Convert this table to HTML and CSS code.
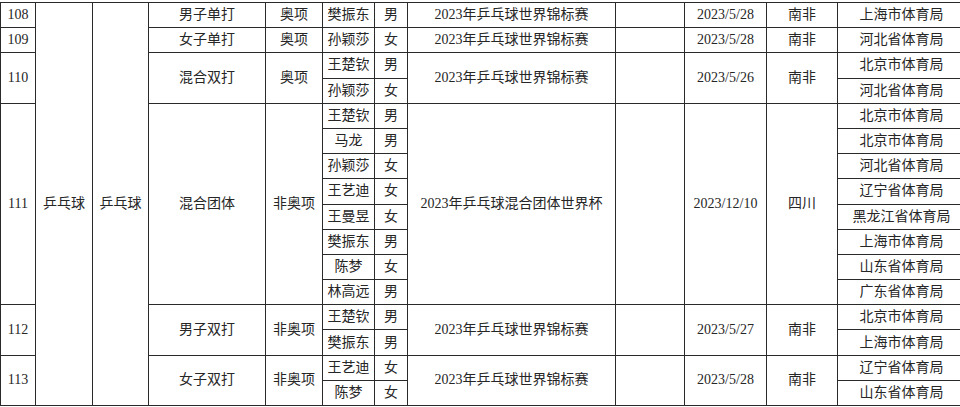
FILE: index.html
```html
<!DOCTYPE html>
<html lang="zh-CN">
<head>
<meta charset="utf-8">
<title>乒乓球</title>
<link rel="stylesheet" href="styles.css">
</head>
<body>
<div class="sheet">
<table class="grid">
  <colgroup>
    <col class="c-no"><col class="c-major"><col class="c-minor"><col class="c-item"><col class="c-oly">
    <col class="c-name"><col class="c-sex"><col class="c-event"><col class="c-blank"><col class="c-date">
    <col class="c-place"><col class="c-unit">
  </colgroup>
  <tbody>
    <tr>
      <td>108</td><td rowspan="16">乒乓球</td><td rowspan="16">乒乓球</td>
      <td>男子单打</td><td>奥项</td><td>樊振东</td><td>男</td>
      <td>2023年乒乓球世界锦标赛</td><td></td><td>2023/5/28</td><td>南非</td><td>上海市体育局</td>
    </tr>
    <tr>
      <td>109</td><td>女子单打</td><td>奥项</td><td>孙颖莎</td><td>女</td>
      <td>2023年乒乓球世界锦标赛</td><td></td><td>2023/5/28</td><td>南非</td><td>河北省体育局</td>
    </tr>
    <tr>
      <td rowspan="2">110</td><td rowspan="2">混合双打</td><td rowspan="2">奥项</td><td>王楚钦</td><td>男</td>
      <td rowspan="2">2023年乒乓球世界锦标赛</td><td rowspan="2"></td><td rowspan="2">2023/5/26</td><td rowspan="2">南非</td><td>北京市体育局</td>
    </tr>
    <tr><td>孙颖莎</td><td>女</td><td>河北省体育局</td></tr>
    <tr>
      <td rowspan="8">111</td><td rowspan="8">混合团体</td><td rowspan="8">非奥项</td><td>王楚钦</td><td>男</td>
      <td rowspan="8">2023年乒乓球混合团体世界杯</td><td rowspan="8"></td><td rowspan="8">2023/12/10</td><td rowspan="8">四川</td><td>北京市体育局</td>
    </tr>
    <tr><td>马龙</td><td>男</td><td>北京市体育局</td></tr>
    <tr><td>孙颖莎</td><td>女</td><td>河北省体育局</td></tr>
    <tr><td>王艺迪</td><td>女</td><td>辽宁省体育局</td></tr>
    <tr><td>王曼昱</td><td>女</td><td>黑龙江省体育局</td></tr>
    <tr><td>樊振东</td><td>男</td><td>上海市体育局</td></tr>
    <tr><td>陈梦</td><td>女</td><td>山东省体育局</td></tr>
    <tr><td>林高远</td><td>男</td><td>广东省体育局</td></tr>
    <tr>
      <td rowspan="2">112</td><td rowspan="2">男子双打</td><td rowspan="2">非奥项</td><td>王楚钦</td><td>男</td>
      <td rowspan="2">2023年乒乓球世界锦标赛</td><td rowspan="2"></td><td rowspan="2">2023/5/27</td><td rowspan="2">南非</td><td>北京市体育局</td>
    </tr>
    <tr><td>樊振东</td><td>男</td><td>上海市体育局</td></tr>
    <tr>
      <td rowspan="2">113</td><td rowspan="2">女子双打</td><td rowspan="2">非奥项</td><td>王艺迪</td><td>女</td>
      <td rowspan="2">2023年乒乓球世界锦标赛</td><td rowspan="2"></td><td rowspan="2">2023/5/28</td><td rowspan="2">南非</td><td>辽宁省体育局</td>
    </tr>
    <tr><td>陈梦</td><td>女</td><td>山东省体育局</td></tr>
  </tbody>
</table>
</div>
</body>
</html>
```
FILE: styles.css
```css
html, body {
  margin: 0;
  padding: 0;
  background: #ffffff;
  overflow: hidden;
}
.sheet {
  width: 960px;
  height: 407px;
  overflow: hidden;
  padding-top: 2px;
  box-sizing: border-box;
}
.grid {
  border-collapse: collapse;
  table-layout: fixed;
  width: 965px;
  font-family: "Liberation Serif", "Noto Sans CJK SC", serif;
  font-size: 14px;
  color: #262626;
}
.grid tr {
  height: 25.2px;
}
.grid td {
  border: 1.5px solid #2a2a2a;
  padding: 0;
  text-align: center;
  vertical-align: middle;
  line-height: 18px;
  white-space: nowrap;
}
.c-no { width: 35px; }
.c-major { width: 57px; }
.c-minor { width: 56px; }
.c-item { width: 117px; }
.c-oly { width: 57px; }
.c-name { width: 52px; }
.c-sex { width: 33px; }
.c-event { width: 208px; }
.c-blank { width: 69px; }
.c-date { width: 82px; }
.c-place { width: 71px; }
.c-unit { width: 128px; }
```
